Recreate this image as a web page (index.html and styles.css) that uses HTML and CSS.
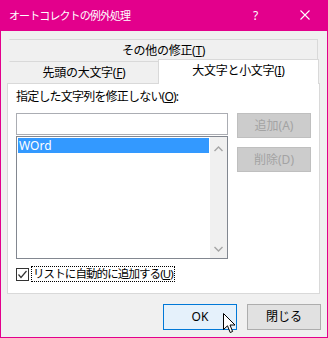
FILE: index.html
```html
<!DOCTYPE html>
<html lang="ja">
<head>
    <meta charset="UTF-8">
    <title>オートコレクトの例外処理</title>
    <link rel="stylesheet" href="styles.css">
</head>
<body>
    <div class="window">
        <div class="titlebar">
            <span class="title">オートコレクトの例外処理</span>
            <span class="help">?</span>
            <span class="close">
                <svg width="10" height="10" viewBox="0 0 10 10">
                    <path d="M0.5 0.5 L9.5 9.5 M9.5 0.5 L0.5 9.5" stroke="#fff" stroke-width="1.1" fill="none"/>
                </svg>
            </span>
        </div>

        <div class="tabs">
            <div class="tab-row">
                <div class="tab tab-wide">その他の修正(<u>T</u>)</div>
            </div>
            <div class="tab-row">
                <div class="tab tab-left">先頭の大文字(<u>F</u>)</div>
                <div class="tab tab-active">大文字と小文字(<u>I</u>)</div>
            </div>
        </div>

        <div class="panel">
            <div class="field-label">指定した文字列を修正しない(<u>O</u>):</div>
            <div class="editor">
                <div class="lists">
                    <div class="textbox"></div>
                    <div class="listbox">
                        <div class="items">
                            <div class="item selected">WOrd</div>
                        </div>
                        <div class="scrollbar">
                            <svg width="9" height="6" viewBox="0 0 9 6">
                                <path d="M0.5 5 L4.5 1 L8.5 5" stroke="#a6a6a6" stroke-width="1.4" fill="none"/>
                            </svg>
                            <svg width="9" height="6" viewBox="0 0 9 6">
                                <path d="M0.5 1 L4.5 5 L8.5 1" stroke="#a6a6a6" stroke-width="1.4" fill="none"/>
                            </svg>
                        </div>
                    </div>
                </div>
                <div class="side-buttons">
                    <button class="btn btn-disabled">追加(A)</button>
                    <button class="btn btn-disabled">削除(D)</button>
                </div>
            </div>
            <div class="check-row">
                <span class="checkbox">
                    <svg width="11" height="11" viewBox="0 0 11 11">
                        <path d="M1.5 5.5 L4 8.5 L9.5 2" stroke="#333" stroke-width="1.2" fill="none"/>
                    </svg>
                </span>
                <span class="check-label">リストに自動的に追加する(<u>U</u>)</span>
            </div>
        </div>

        <div class="footer">
            <button class="btn btn-default">OK</button>
            <button class="btn">閉じる</button>
            <svg class="cursor" width="13" height="21" viewBox="0 0 13 21">
                <path d="M0.5 0.5 L0.5 16.5 L4.5 12.8 L7.2 19.5 L9.6 18.5 L7 12 L12 12 Z" fill="#fff" stroke="#000" stroke-width="1"/>
            </svg>
        </div>
    </div>
</body>
</html>
```

FILE: styles.css
```css
* {
    margin: 0;
    padding: 0;
    box-sizing: border-box;
}

body {
    font-family: "Noto Sans", "Noto Sans CJK JP", sans-serif;
    font-size: 12px;
    color: #000;
    background: #f0f0f0;
}

u {
    text-decoration: underline;
    text-underline-offset: 1px;
}

.window {
    width: 328px;
    height: 338px;
    border: 1px solid #e3008c;
    border-top: none;
    background: #f0f0f0;
    display: flex;
    flex-direction: column;
}

/* title bar */
.titlebar {
    height: 31px;
    margin: 0 -1px;
    background: #e3008c;
    color: #fff;
    display: flex;
    align-items: center;
    padding-left: 9px;
}

.title {
    font-size: 11px;
    letter-spacing: -0.9px;
    flex: 1;
    line-height: 16px;
}

.help {
    font-size: 12px;
    width: 10px;
    margin-right: 37px;
    line-height: 14px;
}

.close {
    display: flex;
    margin-right: 18px;
    margin-bottom: 1px;
}

/* tabs */
.tabs {
    margin-top: 8px;
    padding-left: 8px;
}

.tab-row {
    display: flex;
    height: 22px;
    align-items: flex-start;
}

.tab {
    height: 22px;
    display: flex;
    align-items: center;
    justify-content: center;
    border: 1px solid #d9d9d9;
    border-left-color: #f0f0f0;
    border-bottom: none;
    line-height: 16px;
    letter-spacing: -0.3px;
}

.tab-wide {
    width: 309px;
    padding-top: 1px;
}

.tab-left {
    width: 149px;
    border-right: none;
    padding-top: 1px;
}

.tab-active {
    width: 161px;
    height: 25px;
    margin-top: -2px;
    margin-bottom: -1px;
    background: #fff;
    border-left-color: #d9d9d9;
    position: relative;
    z-index: 1;
    padding-bottom: 2px;
}

/* tab page */
.panel {
    margin-left: 6px;
    width: 313px;
    height: 211px;
    background: #fff;
    border: 1px solid #d9d9d9;
    padding: 5px 0 0 8px;
}

.field-label {
    line-height: 16px;
    margin-bottom: 8px;
    letter-spacing: -0.8px;
}

.editor {
    display: flex;
    gap: 9px;
}

.lists {
    width: 212px;
}

.textbox {
    height: 22px;
    border: 1px solid #abadb3;
    background: #fff;
    margin-bottom: 1px;
}

.listbox {
    height: 123px;
    border: 1px solid #828790;
    display: flex;
}

.items {
    flex: 1;
    padding: 1px;
}

.item {
    height: 15px;
    line-height: 15px;
    padding-left: 1px;
}

.item.selected {
    background: #3399ff;
    color: #fff;
}

.scrollbar {
    width: 17px;
    background: #f0f0f0;
    display: flex;
    flex-direction: column;
    align-items: center;
    justify-content: space-between;
    padding: 9px 0 6px;
}

.side-buttons {
    display: flex;
    flex-direction: column;
    gap: 9px;
}

.btn {
    width: 74px;
    height: 25px;
    font-family: "Noto Sans", "Noto Sans CJK JP", sans-serif;
    font-size: 12px;
    background: #e1e1e1;
    border: 1px solid #adadad;
    color: #000;
    line-height: 16px;
}

.btn-disabled {
    background: #cccccc;
    border-color: #bfbfbf;
    color: #a3a3a3;
}

.check-row {
    display: flex;
    align-items: center;
    margin-top: 7px;
    gap: 2px;
}

.checkbox {
    width: 13px;
    height: 13px;
    border: 1px solid #333;
    background: #fff;
    display: flex;
    align-items: center;
    justify-content: center;
}

.check-label {
    border: 1px dotted #000;
    padding: 0 1px;
    font-size: 11.5px;
    line-height: 14px;
    letter-spacing: -0.9px;
}

/* bottom buttons */
.footer {
    display: flex;
    justify-content: flex-end;
    gap: 10px;
    padding: 10px 6px 0 0;
    position: relative;
}

.footer .btn {
    height: 26px;
}

.btn-default {
    background: #e5f1fb;
    border-color: #0078d7;
}

.cursor {
    position: absolute;
    left: 222px;
    top: 19px;
}
```
